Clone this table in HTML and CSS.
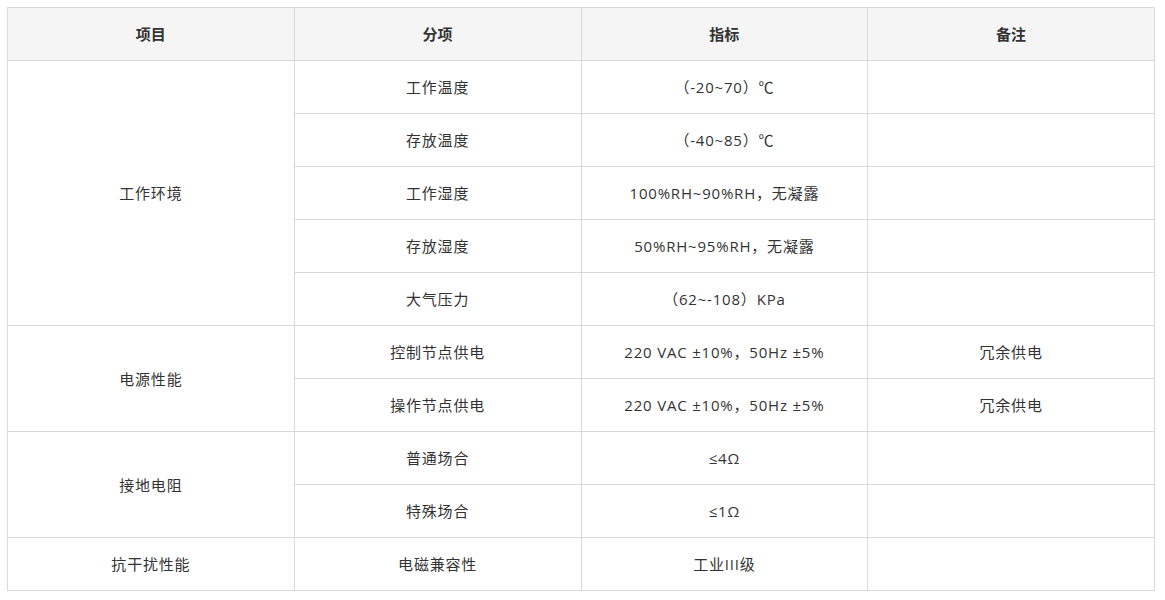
FILE: index.html
```html
<!DOCTYPE html>
<html lang="zh-CN">
<head>
<meta charset="utf-8">
<title>技术指标</title>
<link rel="stylesheet" href="styles.css">
</head>
<body>
<table class="spec">
  <colgroup><col class="c"><col class="c"><col class="c"><col class="c"></colgroup>
  <thead>
    <tr><th>项目</th><th>分项</th><th>指标</th><th>备注</th></tr>
  </thead>
  <tbody>
    <tr><td rowspan="5">工作环境</td><td>工作温度</td><td>（-20~70）℃</td><td></td></tr>
    <tr><td>存放温度</td><td>（-40~85）℃</td><td></td></tr>
    <tr><td>工作湿度</td><td>100%RH~90%RH，无凝露</td><td></td></tr>
    <tr><td>存放湿度</td><td>50%RH~95%RH，无凝露</td><td></td></tr>
    <tr><td>大气压力</td><td>（62~-108）KPa</td><td></td></tr>
    <tr><td rowspan="2">电源性能</td><td>控制节点供电</td><td>220 VAC ±10%，50Hz ±5%</td><td>冗余供电</td></tr>
    <tr><td>操作节点供电</td><td>220 VAC ±10%，50Hz ±5%</td><td>冗余供电</td></tr>
    <tr><td rowspan="2">接地电阻</td><td>普通场合</td><td>≤4Ω</td><td></td></tr>
    <tr><td>特殊场合</td><td>≤1Ω</td><td></td></tr>
    <tr><td>抗干扰性能</td><td>电磁兼容性</td><td>工业III级</td><td></td></tr>
  </tbody>
</table>
</body>
</html>
```

FILE: styles.css
```css
html, body {
  margin: 0;
  padding: 0;
  background: #fff;
}
body {
  padding: 7px;
  font-family: "Open Sans", "Noto Sans CJK SC", sans-serif;
  font-size: 15px;
  letter-spacing: 0.8px;
  color: #333;
}
.spec {
  width: 1148px;
  border-collapse: collapse;
  table-layout: fixed;
}
.spec .c {
  width: 25%;
}
.spec th,
.spec td {
  border: 1px solid #d9d9d9;
  height: 52px;
  padding: 0 8px;
  text-align: center;
  vertical-align: middle;
  line-height: 20px;
}
.spec th {
  background: #f5f5f5;
  font-weight: 700;
  color: #333;
  letter-spacing: 0;
}
```
